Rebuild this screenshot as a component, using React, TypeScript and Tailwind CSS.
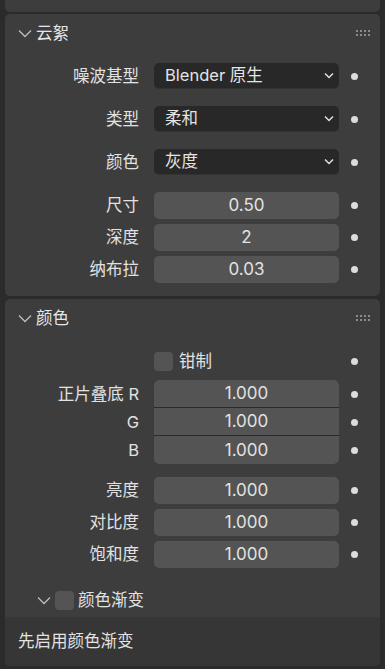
import React from "react";

const FONT = { fontFamily: 'Inter, "Noto Sans CJK SC", "Noto Sans", sans-serif' };

function Chevron({ className = "" }: { className?: string }) {
  return (
    <svg className={className} width="14" height="9" viewBox="0 0 14 9" fill="none">
      <path d="M1 1.5 L7 7.5 L13 1.5" stroke="#bdbdbd" strokeWidth="1.3" />
    </svg>
  );
}

function Grip() {
  const dots = [];
  for (let r = 0; r < 2; r++)
    for (let c = 0; c < 4; c++)
      dots.push(<rect key={`${r}-${c}`} x={c * 4} y={r * 4} width="2" height="2" fill="#8c8c8c" />);
  return (
    <svg width="14" height="6" viewBox="0 0 14 6">
      {dots}
    </svg>
  );
}

function Dot() {
  return (
    <div className="w-[31px] flex justify-center">
      <div className="w-[7px] h-[7px] rounded-full bg-[#dcdcdc]" />
    </div>
  );
}

function Label({ text }: { text: string }) {
  return <div className="w-[134px] text-right text-[#e2e2e2] leading-none">{text}</div>;
}

function DropRow({ label, value, mt }: { label: string; value: string; mt: string }) {
  return (
    <div className={`flex items-center h-[26px] ${mt}`}>
      <Label text={label} />
      <div className="ml-[15px] w-[185px] h-[26px] rounded-[5px] bg-[#282828] border-b border-[#333] flex items-center pl-[11px] pr-[5px] text-[#e4e4e4]">
        <span className="flex-1 leading-none">{value}</span>
        <svg width="10" height="7" viewBox="0 0 10 7" fill="none">
          <path d="M1 1.5 L5 5.5 L9 1.5" stroke="#e0e0e0" strokeWidth="1.5" />
        </svg>
      </div>
      <Dot />
    </div>
  );
}

function NumRow({ label, value, mt }: { label: string; value: string; mt: string }) {
  return (
    <div className={`flex items-center h-[27px] ${mt}`}>
      <Label text={label} />
      <div className="ml-[15px] w-[185px] h-[27px] rounded-[5px] bg-[#545454] flex items-center justify-center text-[#e2e2e2] leading-none text-[17px]">
        {value}
      </div>
      <Dot />
    </div>
  );
}

function Header({ title }: { title: string }) {
  return (
    <div className="h-[38px] flex items-center pl-[13px] pr-[10px]">
      <Chevron />
      <span className="ml-[4px] text-[#e6e6e6] text-[16.5px] leading-none flex-1">{title}</span>
      <Grip />
    </div>
  );
}

export default function App() {
  return (
    <div className="w-[385px] h-[669px] bg-[#2b2b2b] overflow-hidden text-[16.5px]" style={FONT}>
      <div className="mx-[5px] h-[12px] bg-[#3d3d3d] rounded-b-[5px]" />

      <div className="mx-[5px] mt-[2px] bg-[#3d3d3d] rounded-[5px] pb-[13px]">
        <Header title="云絮" />
        <DropRow label="噪波基型" value="Blender 原生" mt="mt-[11px]" />
        <DropRow label="类型" value="柔和" mt="mt-[17px]" />
        <DropRow label="颜色" value="灰度" mt="mt-[17px]" />
        <NumRow label="尺寸" value="0.50" mt="mt-[17px]" />
        <NumRow label="深度" value="2" mt="mt-[5px]" />
        <NumRow label="纳布拉" value="0.03" mt="mt-[5px]" />
      </div>

      <div className="mx-[5px] mt-[3px] bg-[#3d3d3d] rounded-[5px] overflow-hidden">
        <Header title="颜色" />
        <div className="flex items-center h-[26px] mt-[11px]">
          <div className="w-[134px]" />
          <div className="ml-[15px] w-[185px] flex items-center">
            <div className="w-[19px] h-[19px] rounded-[4px] bg-[#545454]" />
            <span className="ml-[6px] text-[#e2e2e2] leading-none">钳制</span>
          </div>
          <Dot />
        </div>
        <div className="flex mt-[6px]">
          <div className="w-[134px] flex flex-col text-right text-[#e2e2e2]">
            <div className="h-[28px] flex items-center justify-end leading-none">正片叠底 R</div>
            <div className="h-[28px] flex items-center justify-end leading-none">G</div>
            <div className="h-[28px] flex items-center justify-end leading-none">B</div>
          </div>
          <div className="ml-[15px] w-[185px] flex flex-col rounded-[5px] overflow-hidden bg-[#2b2b2b] gap-px text-[17px]">
            <div className="h-[27px] bg-[#545454] flex items-center justify-center text-[#e2e2e2] leading-none">1.000</div>
            <div className="h-[27px] bg-[#545454] flex items-center justify-center text-[#e2e2e2] leading-none">1.000</div>
            <div className="h-[28px] bg-[#545454] flex items-center justify-center text-[#e2e2e2] leading-none">1.000</div>
          </div>
          <div className="flex flex-col">
            <div className="h-[28px] flex items-center"><Dot /></div>
            <div className="h-[28px] flex items-center"><Dot /></div>
            <div className="h-[28px] flex items-center"><Dot /></div>
          </div>
        </div>
        <NumRow label="亮度" value="1.000" mt="mt-[13px]" />
        <NumRow label="对比度" value="1.000" mt="mt-[5px]" />
        <NumRow label="饱和度" value="1.000" mt="mt-[5px]" />
        <div className="h-[33px] mt-[16px] flex items-center pl-[32px]">
          <Chevron />
          <div className="ml-[4px] w-[19px] h-[19px] rounded-[4px] bg-[#545454]" />
          <span className="ml-[4px] text-[#e2e2e2] leading-none">颜色渐变</span>
        </div>
        <div className="h-[49px] bg-[#363636] flex items-center pl-[13px] text-[#e2e2e2] leading-none">
          先启用颜色渐变
        </div>
      </div>
    </div>
  );
}
